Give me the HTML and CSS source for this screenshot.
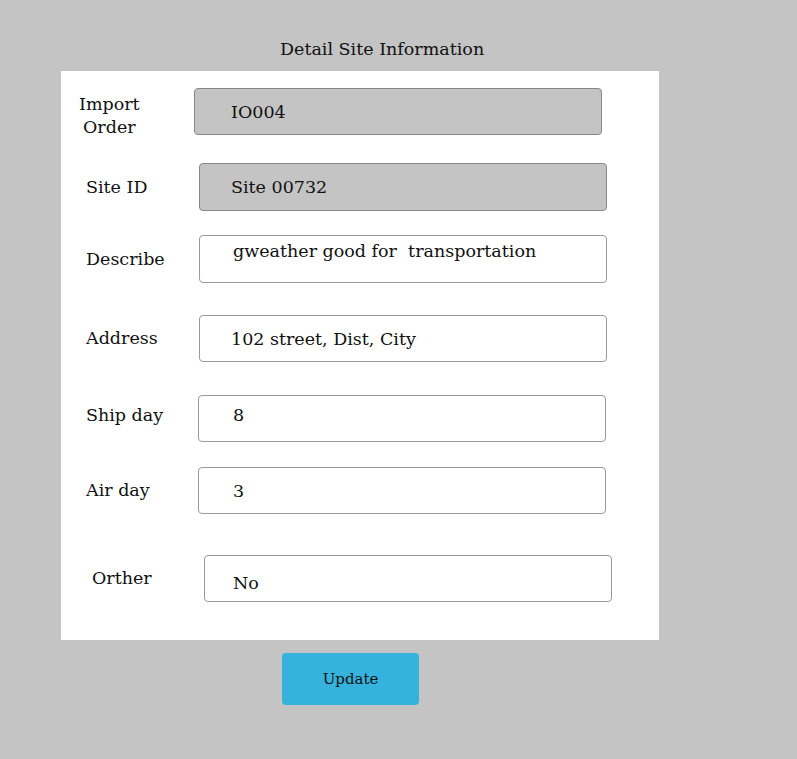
FILE: index.html
```html
<!DOCTYPE html>
<html>
<head>
<meta charset="utf-8">
<link rel="stylesheet" href="styles.css">
</head>
<body>
<div class="page">
  <h1 class="title">Detail Site Information</h1>
  <div class="panel">
    <div class="row row-import">
      <div class="label"><span class="label-stack">Import<br>Order</span></div>
      <div class="field field-grey">IO004</div>
    </div>
    <div class="row row-site">
      <div class="label">Site ID</div>
      <div class="field field-grey">Site 00732</div>
    </div>
    <div class="row row-describe">
      <div class="label">Describe</div>
      <div class="field field-top">gweather good for&nbsp; transportation</div>
    </div>
    <div class="row row-address">
      <div class="label">Address</div>
      <div class="field">102 street, Dist, City</div>
    </div>
    <div class="row row-ship">
      <div class="label">Ship day</div>
      <div class="field field-up">8</div>
    </div>
    <div class="row row-air">
      <div class="label">Air day</div>
      <div class="field field-num">3</div>
    </div>
    <div class="row row-other">
      <div class="label">Orther</div>
      <div class="field field-down">No</div>
    </div>
  </div>
  <div class="actions">
    <button class="btn">Update</button>
  </div>
</div>
</body>
</html>
```
FILE: styles.css
```css
* { box-sizing: border-box; }
html, body { margin: 0; padding: 0; }
body {
  background: #c4c4c4;
  font-family: "DejaVu Serif", serif;
  color: #111;
  width: 797px;
  height: 759px;
  overflow: hidden;
}
.page {
  padding-top: 38px;
  padding-left: 61px;
}
.title {
  margin: 0;
  font-size: 17.5px;
  font-weight: normal;
  line-height: 22px;
  height: 33px;
  padding-left: 219px;
}
.panel {
  width: 598px;
  height: 569px;
  background: #fff;
  display: flex;
  flex-direction: column;
}
.row {
  display: flex;
  align-items: center;
}
.label {
  font-size: 17.5px;
  line-height: 23px;
}
.label-stack {
  display: inline-block;
  text-align: center;
}
.field {
  width: 408px;
  height: 47px;
  border: 1px solid #9a9a9a;
  border-radius: 4px;
  background: #fff;
  font-size: 17.5px;
  display: flex;
  align-items: center;
  padding-left: 31px;
}
.field-grey { background: #c4c4c4; border-color: #888; }
.field-top { align-items: flex-start; padding-top: 5px; padding-left: 33px; }
.field-up { padding-bottom: 7px; padding-left: 34px; }
.field-num { padding-left: 34px; }
.field-down { padding-top: 9px; padding-left: 28px; }

.row-import { margin-top: 17px; align-items: flex-start; }
.row-import .label { padding-left: 18px; width: 133px; height: 47px; padding-top: 5px; }
.row-import .field { padding-left: 36px; }
.row-site { margin-top: 28px; }
.row-site .field { height: 48px; }
.row-site .label { padding-left: 25px; width: 138px; }
.row-describe { margin-top: 24px; }
.row-describe .field { height: 48px; }
.row-describe .label { padding-left: 25px; width: 138px; }
.row-address { margin-top: 32px; }
.row-address .label { padding-left: 25px; width: 138px; }
.row-ship { margin-top: 33px; }
.row-ship .label { padding-left: 25px; width: 137px; padding-bottom: 7px; }
.row-air { margin-top: 25px; }
.row-air .label { padding-left: 25px; width: 137px; }
.row-other { margin-top: 41px; }
.row-other .label { padding-left: 31px; width: 143px; }

.actions {
  padding-top: 13px;
  padding-left: 221px;
}
.btn {
  width: 137px;
  height: 52px;
  background: #35b3dc;
  border: none;
  border-radius: 4px;
  font-family: inherit;
  font-size: 15px;
  color: #111;
  padding: 0;
}
```
